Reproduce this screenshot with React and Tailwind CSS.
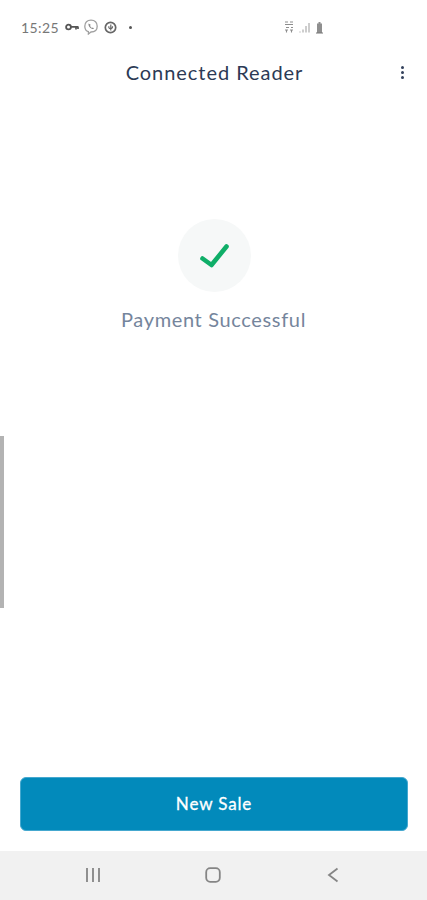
import React from "react";

const Key = () => (
  <svg width="14" height="8" viewBox="0 0 14 8" fill="none" className="ml-[6px]">
    <circle cx="3.500" cy="4" r="2.400" stroke="#555" strokeWidth="1.800" />
    <path d="M6 3.800h7.500M11 4v2.600M13 4v2" stroke="#555" strokeWidth="1.700" />
  </svg>
);

const Viber = () => (
  <svg width="16" height="16" viewBox="0 0 16 16" fill="none" className="ml-[4px]">
    <path d="M8 1.200c3.800 0 6.200 1.900 6.200 6 0 4-2.400 5.800-6.200 5.800l-2.600 2v-2.300C3 12 1.800 10.300 1.800 7.200c0-4.100 2.400-6 6.200-6z" stroke="#a0a0a0" strokeWidth="1.300" />
    <path d="M5.500 4.500c-.5 3 2.500 6 5.500 5.500l-1-1.600-1.200.5-1.800-2 .7-1.200z" fill="#8a8a8a" />
  </svg>
);

const Pin = () => (
  <svg width="13" height="13" viewBox="0 0 13 13" fill="none" className="ml-[5px]">
    <circle cx="6.500" cy="6.500" r="5.200" stroke="#666" strokeWidth="1.700" />
    <path d="M6.800 3.500v6M5 5.200c-.6 1.500.3 2.500 1.500 2.500s2.200-.8 2-2.500" stroke="#666" strokeWidth="1.200" />
  </svg>
);

const Signal = () => (
  <svg width="44" height="15" viewBox="0 0 44 15" fill="none">
    <path d="M1 2h3M6 2h3M1 4.500h8M2 7.500h3M7 7.500h2M1 10h3M6 10h3M2.500 12.500v-2M7.500 12.500v-2" stroke="#8d8d8d" strokeWidth="1.100" />
    <path d="M16 11.500v1M19 9.500v3M22 6v6.500M25 3v9.500" stroke="#a5a5a5" strokeWidth="1.100" />
    <path d="M33 3.500h1.500V2h2v1.500H38v9.500h-5z" fill="#8f8f8f" />
    <path d="M32 13h7" stroke="#777" strokeWidth="1" />
  </svg>
);

export default function App() {
  return (
    <div className="relative flex h-[900px] w-[427px] flex-col overflow-hidden bg-white font-['Lato',sans-serif]">
      <div className="flex h-[54px] shrink-0 items-center pl-[21px] pr-[99px]">
        <span className="text-[14px] tracking-[0.4px] text-[#777]">15:25</span>
        <Key />
        <Viber />
        <Pin />
        <span className="ml-[12px] h-[3px] w-[3px] rounded-full bg-[#555]" />
        <div className="ml-auto flex">
          <Signal />
        </div>
      </div>

      <header className="relative flex h-[36px] shrink-0 items-center justify-center pl-[2px]">
        <h1 className="text-[20px] leading-none tracking-[0.95px] text-[#2c3a55]">Connected Reader</h1>
        <div className="absolute left-[401px] top-[12px] flex flex-col gap-[2px]">
          <span className="h-[3px] w-[3px] rounded-full bg-[#33415c]" />
          <span className="h-[3px] w-[3px] rounded-full bg-[#33415c]" />
          <span className="h-[3px] w-[3px] rounded-full bg-[#33415c]" />
        </div>
      </header>

      <main className="flex flex-1 flex-col items-center pl-[1px] pt-[129px]">
        <div className="flex h-[73px] w-[73px] items-center justify-center rounded-full bg-[#f6f8f8]">
          <svg width="32" height="26" viewBox="0 0 32 26" fill="none">
            <path d="M4.500 15.500 13.500 22 28.500 3.500" stroke="#0fae68" strokeWidth="4.600" strokeLinecap="round" strokeLinejoin="round" />
          </svg>
        </div>
        <p className="mr-[1px] mt-[15px] text-[20px] leading-[24px] tracking-[0.65px] text-[#75859c]">Payment Successful</p>
      </main>

      <div className="shrink-0 pb-[20px] pl-[20px] pr-[19px]">
        <button className="flex h-[54px] w-full items-center justify-center rounded-[6px] border border-[#45a8cf] bg-[#028abb] text-[17px] font-normal tracking-[0.85px] text-white [-webkit-text-stroke:0.3px_white]">
          New Sale
        </button>
      </div>

      <nav className="grid h-[49px] shrink-0 grid-cols-[120px_120px_120px] items-center justify-center bg-[#f1f1f1] pb-[1px] pr-[1px]">
        <div className="flex justify-center">
          <svg width="16" height="16" viewBox="0 0 16 16" fill="none">
            <path d="M2 1v14M8 1v14M14 1v14" stroke="#858585" strokeWidth="1.800" />
          </svg>
        </div>
        <div className="flex justify-center">
          <svg width="16" height="16" viewBox="0 0 16 16" fill="none">
            <rect x="1.200" y="1.200" width="13.600" height="13.600" rx="4" stroke="#858585" strokeWidth="1.800" />
          </svg>
        </div>
        <div className="flex justify-center">
          <svg width="12" height="16" viewBox="0 0 12 16" fill="none">
            <path d="M10.500 1.500 2 8l8.500 6.500" stroke="#858585" strokeWidth="1.800" />
          </svg>
        </div>
      </nav>

      <div className="absolute left-0 top-[436px] h-[172px] w-[4px] bg-[#b3b3b3]" />
    </div>
  );
}
